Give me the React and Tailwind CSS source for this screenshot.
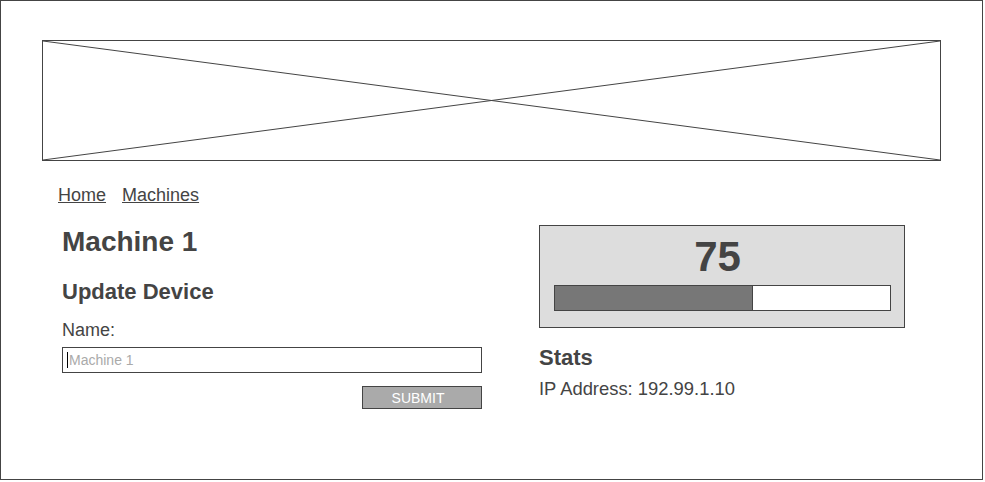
import { useState } from "react";

export default function App(){

const [name,setName] = useState("");
const progress = 198;

return(

<div className="w-[983px] h-[480px] border border-[#444] bg-white text-[#444] font-['Liberation_Sans',Arial,sans-serif]">

{/* BANNER PLACEHOLDER */}

<div className="ml-[41px] mt-[39px] w-[899px] h-[121px] border border-[#444]">
<svg width="897" height="119" viewBox="0 0 897 119" preserveAspectRatio="none" className="block">
<line x1="0" y1="0" x2="897" y2="119" stroke="#444" strokeWidth="1"/>
<line x1="0" y1="119" x2="897" y2="0" stroke="#444" strokeWidth="1"/>
</svg>
</div>


{/* NAV */}

<nav className="ml-[57px] mt-6 flex gap-4 text-[18px] leading-[20px]">
<a href="#" className="underline">Home</a>
<a href="#" className="underline">Machines</a>
</nav>


<div className="flex mt-5">

{/* LEFT */}

<div className="ml-[61px] w-[420px]">

<h1 className="mt-px text-[28px] leading-[32px] font-bold">
Machine 1
</h1>

<h2 className="mt-[21px] text-[22px] leading-[26px] font-bold">
Update Device
</h2>

<label className="block mt-[15px] text-[18px] leading-[20px]">
Name:
</label>

<div className="relative mt-[7px]">
<input
value={name}
onChange={(e)=>setName(e.target.value)}
placeholder="Machine 1"
className="w-[420px] h-[26px] border border-[#444] pl-[6px] text-[14px] outline-none placeholder:text-[#aaa] font-['Liberation_Sans',Arial,sans-serif]"
/>
<span className="absolute left-[5px] top-[5px] w-px h-[16px] bg-black"></span>
</div>

<div className="flex justify-end mt-[13px]">
<button className="w-[120px] h-[23px] bg-[#aaa] border border-[#444] text-white text-[14px] leading-none pr-2">
SUBMIT
</button>
</div>

</div>


{/* RIGHT */}

<div className="ml-[57px] w-[366px]">

<div className="h-[103px] border border-[#444] bg-[#ddd] pt-2 pl-[14px]">

<div className="w-[337px] text-center text-[42px] leading-[46px] font-bold pr-[10px]">
75
</div>

<div className="mt-[5px] w-[337px] h-[26px] border border-[#444] bg-white flex">
<div className="h-full bg-[#777] border-r border-[#444]" style={{width:progress}}></div>
</div>

</div>

<h3 className="mt-[17px] text-[22px] leading-[26px] font-bold">
Stats
</h3>

<p className="mt-[8px] text-[18.4px] leading-[20px]">
IP Address: 192.99.1.10
</p>

</div>

</div>

</div>

)

}
